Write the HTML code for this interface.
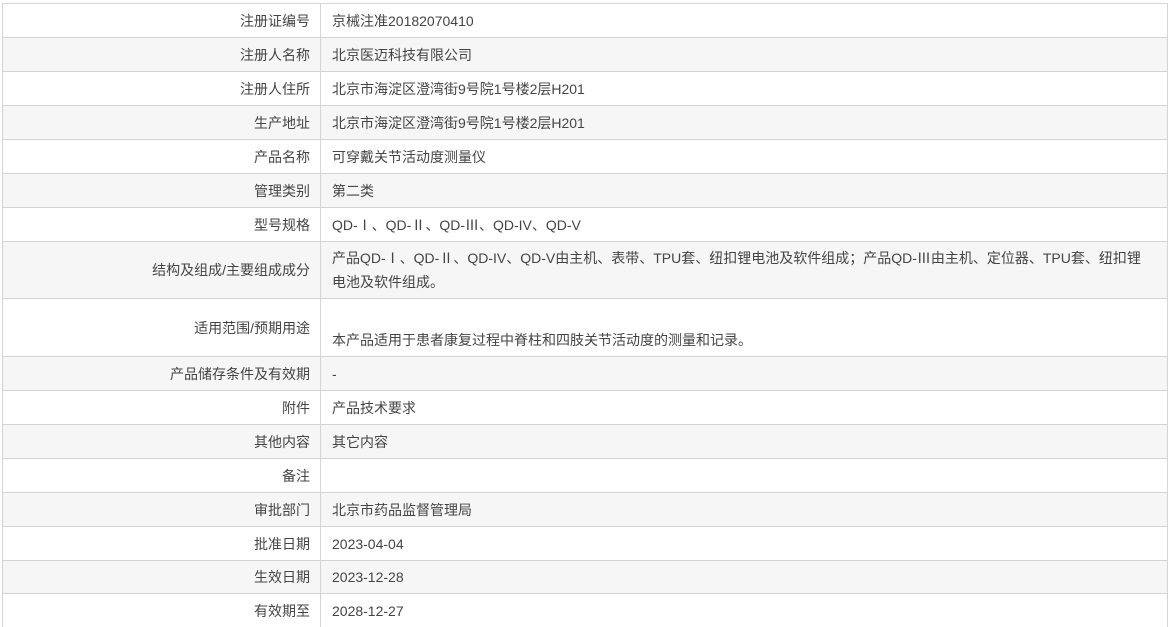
<!DOCTYPE html><html><head><meta charset="utf-8"><style>
body{margin:0;width:1171px;height:624px;overflow:hidden;background:#fff;font-family:"Liberation Sans","Noto Sans CJK SC",sans-serif;font-size:14px;color:#444}
.r{position:absolute;left:2px;width:1166px;border-left:1px solid #d4d4d4;border-right:1px solid #d4d4d4;border-top:1px solid #d4d4d4;box-sizing:border-box}
.g{background:#f6f6f6}
.l{position:absolute;left:0;width:318px;top:0;bottom:0;border-right:1px solid #d4d4d4;text-align:right;padding-right:10px;box-sizing:border-box;display:flex;align-items:center;justify-content:flex-end}
.v{position:absolute;left:329px;right:8px;top:0;bottom:0;display:flex;align-items:center;line-height:24px}
</style></head><body>
<div class="r" style="top:3px;height:34px"><div class="l">注册证编号</div><div class="v">京械注准20182070410</div></div>
<div class="r g" style="top:37px;height:34px"><div class="l">注册人名称</div><div class="v">北京医迈科技有限公司</div></div>
<div class="r" style="top:71px;height:34px"><div class="l">注册人住所</div><div class="v">北京市海淀区澄湾街9号院1号楼2层H201</div></div>
<div class="r g" style="top:105px;height:34px"><div class="l">生产地址</div><div class="v">北京市海淀区澄湾街9号院1号楼2层H201</div></div>
<div class="r" style="top:139px;height:34px"><div class="l">产品名称</div><div class="v">可穿戴关节活动度测量仪</div></div>
<div class="r g" style="top:173px;height:34px"><div class="l">管理类别</div><div class="v">第二类</div></div>
<div class="r" style="top:207px;height:34px"><div class="l">型号规格</div><div class="v">QD-Ⅰ、QD-Ⅱ、QD-Ⅲ、QD-IV、QD-V</div></div>
<div class="r g" style="top:241px;height:57px"><div class="l">结构及组成/主要组成成分</div><div class="v">产品QD-Ⅰ、QD-Ⅱ、QD-IV、QD-V由主机、表带、TPU套、纽扣锂电池及软件组成；产品QD-Ⅲ由主机、定位器、TPU套、纽扣锂<br>电池及软件组成。</div></div>
<div class="r" style="top:298px;height:58px"><div class="l">适用范围/预期用途</div><div class="v" style="align-items:flex-start;padding-top:29px">本产品适用于患者康复过程中脊柱和四肢关节活动度的测量和记录。</div></div>
<div class="r g" style="top:356px;height:34px"><div class="l">产品储存条件及有效期</div><div class="v">-</div></div>
<div class="r" style="top:390px;height:34px"><div class="l">附件</div><div class="v">产品技术要求</div></div>
<div class="r g" style="top:424px;height:34px"><div class="l">其他内容</div><div class="v">其它内容</div></div>
<div class="r" style="top:458px;height:34px"><div class="l">备注</div><div class="v"></div></div>
<div class="r g" style="top:492px;height:34px"><div class="l">审批部门</div><div class="v">北京市药品监督管理局</div></div>
<div class="r" style="top:526px;height:34px"><div class="l">批准日期</div><div class="v">2023-04-04</div></div>
<div class="r g" style="top:560px;height:33px"><div class="l">生效日期</div><div class="v">2023-12-28</div></div>
<div class="r" style="top:593px;height:34px"><div class="l">有效期至</div><div class="v">2028-12-27</div></div>
</body></html>
